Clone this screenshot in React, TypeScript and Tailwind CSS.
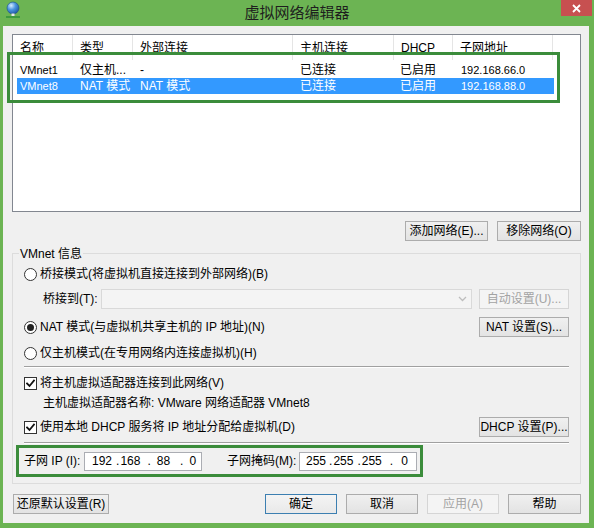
import type { ReactNode } from "react";

const FONT = { fontFamily: '"Liberation Sans", "Noto Sans CJK SC", sans-serif' };

type Row = { name: string; type: string; ext: string; host: string; dhcp: string; subnet: string };

const ROWS: Row[] = [
  { name: "VMnet1", type: "仅主机...", ext: "-", host: "已连接", dhcp: "已启用", subnet: "192.168.66.0" },
  { name: "VMnet8", type: "NAT 模式", ext: "NAT 模式", host: "已连接", dhcp: "已启用", subnet: "192.168.88.0" },
];

const HEADERS = ["名称", "类型", "外部连接", "主机连接", "DHCP", "子网地址"];
const HEAD_W = ["w-[60px]", "w-[60px]", "w-[160px]", "w-[101px]", "w-[59px]", "w-[100px]"];
const CELL_W = ["w-[56px] pl-[3px]", "w-[60px] pl-[7px]", "w-[160px] pl-[7px]", "w-[101px] pl-[7px]", "w-[59px] pl-[6px]", "w-[100px] pl-[8px]"];

const Button = ({
  children,
  className = "",
  disabled = false,
  primary = false,
}: {
  children: ReactNode;
  className?: string;
  disabled?: boolean;
  primary?: boolean;
}) => {
  const tone = disabled
    ? "border-[#d5d5d5] bg-[#f4f4f4] text-[#a3a3a3]"
    : primary
      ? "border-[#3c7fb1] bg-gradient-to-b from-[#f4f4f4] to-[#e9e9e9] text-black"
      : "border-[#acacac] bg-gradient-to-b from-[#f0f0f0] to-[#e3e3e3] text-black";
  return (
    <div className={`flex h-[20px] items-center justify-center border leading-none ${tone} ${className}`}>
      {children}
    </div>
  );
};

const Radio = ({ checked = false }: { checked?: boolean }) => (
  <div className="flex h-[13px] w-[13px] shrink-0 items-center justify-center rounded-full border border-[#333] bg-white">
    {checked && <div className="h-[7px] w-[7px] rounded-full bg-[#222]" />}
  </div>
);

const Check = () => (
  <div className="flex h-[13px] w-[13px] shrink-0 items-center justify-center border border-[#333] bg-white">
    <svg width="9" height="9" viewBox="0 0 9 9" fill="none">
      <path d="M1 4.5 L3.5 7 L8 1.5" stroke="#111" strokeWidth="1.8" strokeLinecap="square" />
    </svg>
  </div>
);

const Separator = () => <div className="h-[2px] border-t border-b border-t-[#a0a0a0] border-b-white" />;

const IpBox = ({ parts }: { parts: [string, string][] }) => (
  <div className="flex h-[19px] w-[118px] items-center whitespace-pre border border-[#abadb3] bg-white leading-none">
    {parts.map(([text, ml], i) => (
      <span key={i} className={ml}>
        {text}
      </span>
    ))}
  </div>
);

export default function App() {
  return (
    <div className="relative flex h-[528px] w-[594px] flex-col bg-[#6cb453] text-[12px] text-black" style={FONT}>
      {/* title bar */}
      <div className="relative flex h-[26px] items-center justify-center">
        <svg className="absolute left-[5px] top-[1px]" width="16" height="18" viewBox="0 0 16 18">
          <defs>
            <radialGradient id="g" cx="0.35" cy="0.3" r="0.8">
              <stop offset="0" stopColor="#d6ecff" />
              <stop offset="0.45" stopColor="#4a94e0" />
              <stop offset="1" stopColor="#1a4f9a" />
            </radialGradient>
          </defs>
          <circle cx="8" cy="7" r="6" fill="url(#g)" stroke="#1d4f8c" strokeWidth="0.6" />
          <rect x="6.5" y="12.5" width="3" height="2.5" fill="#e8e8e8" />
          <rect x="1" y="15" width="14" height="2" fill="#3e9a3e" />
        </svg>
        <span className="pt-[1px] text-[15px] text-[#1e1e1e]">虚拟网络编辑器</span>
        <div className="absolute right-[2px] top-0 flex h-[16px] w-[31px] items-center justify-center bg-[#c75050]">
          <svg width="9" height="9" viewBox="0 0 9 9">
            <path d="M1 1 L8 8 M8 1 L1 8" stroke="#fff" strokeWidth="1.8" />
          </svg>
        </div>
      </div>

      {/* client area */}
      <div className="mb-[5px] ml-[3px] mr-[5px] flex flex-1 flex-col bg-[#f0f0f0] pl-[9px] pr-[8px] pt-[8px]">
        {/* list view */}
        <div className="h-[178px] border border-[#828790] bg-white">
          <div className="flex h-[25px] items-center">
            {HEADERS.map((h, i) => (
              <div key={h} className={`${HEAD_W[i]} flex h-full items-center border-r border-[#e5e5e5] pl-[7px]`}>
                {h}
              </div>
            ))}
          </div>
          <div className="ml-[4px] mt-[2px] flex flex-col">
            {ROWS.map((r, ri) => {
              const cells = [r.name, r.type, r.ext, r.host, r.dhcp, r.subnet];
              const sel = ri === 1;
              return (
                <div
                  key={r.name}
                  className={`flex h-[16px] w-[537px] items-center leading-none ${sel ? "bg-[#3399ff] text-white" : ""}`}
                >
                  {cells.map((c, i) => (
                    <div key={i} className={`${CELL_W[i]} whitespace-nowrap ${i === 0 || i === 5 ? "text-[11px]" : ""}`}>
                      {c}
                    </div>
                  ))}
                </div>
              );
            })}
          </div>
        </div>

        {/* add/remove */}
        <div className="mt-[9px] flex justify-end gap-[9px]">
          <Button className="w-[83px]">添加网络(E)...</Button>
          <Button className="w-[84px]">移除网络(O)</Button>
        </div>

        {/* group box */}
        <div className="relative mt-[12px] h-[231px] border border-[#dcdcdc] pl-[11px] pr-[11px] pt-[10px]">
          <div className="absolute -top-[8px] left-[6px] bg-[#f0f0f0] px-[1px] leading-[16px]">VMnet 信息</div>

          <div className="flex h-[20px] items-center gap-[3px]">
            <Radio />
            <span>桥接模式(将虚拟机直接连接到外部网络)(B)</span>
          </div>

          <div className="mt-[5px] flex h-[20px] items-center pl-[19px]">
            <span className="w-[58px] shrink-0">桥接到(T):</span>
            <div className="flex h-[20px] w-[371px] items-center justify-end border border-[#d9d9d9] bg-[#f4f4f4] pr-[4px]">
              <svg width="9" height="6" viewBox="0 0 9 6">
                <path d="M1 1 L4.5 4.5 L8 1" stroke="#bdbdbd" strokeWidth="1.3" fill="none" />
              </svg>
            </div>
            <Button disabled className="ml-auto w-[90px]">
              自动设置(U)...
            </Button>
          </div>

          <div className="mt-[8px] flex h-[20px] items-center gap-[3px]">
            <Radio checked />
            <span>NAT 模式(与虚拟机共享主机的 IP 地址)(N)</span>
            <Button className="ml-auto w-[90px]">NAT 设置(S)...</Button>
          </div>

          <div className="mt-[6px] flex h-[20px] items-center gap-[3px]">
            <Radio />
            <span>仅主机模式(在专用网络内连接虚拟机)(H)</span>
          </div>

          <div className="mt-[3px]">
            <Separator />
          </div>

          <div className="mt-[5px] flex h-[20px] items-center gap-[3px]">
            <Check />
            <span>将主机虚拟适配器连接到此网络(V)</span>
          </div>

          <div className="flex h-[20px] items-center pl-[19px]">主机虚拟适配器名称: VMware 网络适配器 VMnet8</div>

          <div className="mt-[4px] flex h-[20px] items-center gap-[3px]">
            <Check />
            <span>使用本地 DHCP 服务将 IP 地址分配给虚拟机(D)</span>
            <Button className="ml-auto w-[90px]">DHCP 设置(P)...</Button>
          </div>

          <div className="mt-[5px]">
            <Separator />
          </div>

          <div className="mt-[7px] flex h-[20px] items-center">
            <span className="w-[60px] shrink-0">子网 IP (I):</span>
            <IpBox
              parts={[
                ["192", "ml-[7px]"],
                [".", "ml-[4px]"],
                ["168", "ml-[1px]"],
                [".", "ml-[7px]"],
                ["88", "ml-[6px]"],
                [".", "ml-[10px]"],
                ["0", "ml-[6px]"],
              ]}
            />
            <span className="ml-[25px] w-[72px] shrink-0">子网掩码(M):</span>
            <IpBox
              parts={[
                ["255", "ml-[6px]"],
                [".", "ml-[3px]"],
                ["255", "ml-[1px]"],
                [".", "ml-[4px]"],
                ["255", "ml-[1px]"],
                [".", "ml-[8px]"],
                ["0", "ml-[8px]"],
              ]}
            />
          </div>
        </div>

        {/* bottom buttons */}
        <div className="mt-[10px] flex items-center">
          <Button className="ml-[1px] w-[96px]">还原默认设置(R)</Button>
          <div className="ml-auto flex gap-[9px]">
            <Button primary className="w-[72px]">
              确定
            </Button>
            <Button className="w-[72px]">取消</Button>
            <Button disabled className="w-[72px]">
              应用(A)
            </Button>
            <Button className="w-[73px]">帮助</Button>
          </div>
        </div>
      </div>

      {/* annotation frames */}
      <div className="pointer-events-none absolute left-[7px] top-[52px] h-[51px] w-[553px] border-[3px] border-[#3b8c3b]" />
      <div className="pointer-events-none absolute left-[16px] top-[445px] h-[32px] w-[407px] border-[3px] border-[#3b8c3b]" />
    </div>
  );
}
